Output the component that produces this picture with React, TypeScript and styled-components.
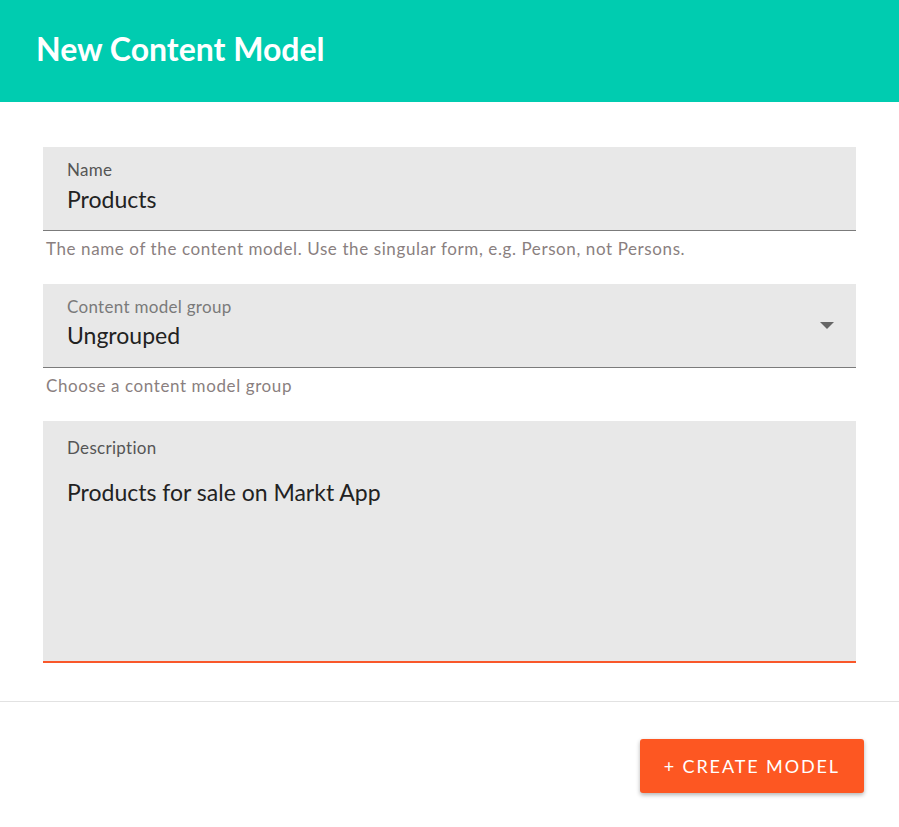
import React from "react";
import styled, { createGlobalStyle } from "styled-components";

const Global = createGlobalStyle`
  html, body { margin: 0; padding: 0; background: #ffffff; }
  body { font-family: Lato, "Liberation Sans", sans-serif; -webkit-font-smoothing: antialiased; }
  * { box-sizing: border-box; }
`;

const Page = styled.div`
  width: 899px;
  min-height: 827px;
  display: flex;
  flex-direction: column;
  background: #fff;
`;

const Header = styled.header`
  height: 102px;
  background: #00ccb0;
  display: flex;
  align-items: center;
  padding: 0 36px;
`;

const Title = styled.h1`
  margin: 0;
  color: #fff;
  font-size: 32px;
  font-weight: 700;
  line-height: 36px;
  padding-bottom: 4px;
`;

const Form = styled.div`
  padding: 45px 43px 38px;
  display: flex;
  flex-direction: column;
`;

const Field = styled.div<{ $h: number; $focused?: boolean }>`
  position: relative;
  height: ${(p) => p.$h}px;
  background: #e8e8e8;
  border-bottom: ${(p) => (p.$focused ? "2px solid #f9572a" : "1px solid #7b7b7b")};
  padding: 13px 24px 0;
  display: flex;
  flex-direction: column;
`;

const Label = styled.div<{ $muted?: boolean; $top?: number }>`
  font-size: 17px;
  line-height: 20px;
  letter-spacing: 0.3px;
  color: ${(p) => (p.$muted ? "#7a7a7a" : "#555")};
  margin-top: ${(p) => p.$top ?? 0}px;
`;

const Value = styled.div<{ $gap: number }>`
  font-size: 23px;
  line-height: 28px;
  color: #222;
  margin-top: ${(p) => p.$gap}px;
`;

const Helper = styled.div`
  font-size: 17px;
  line-height: 20px;
  color: #8a7f7f;
  letter-spacing: 0.6px;
  padding: 8px 3px 25px;
`;

const Arrow = styled.span`
  position: absolute;
  right: 22px;
  top: 38px;
  width: 0;
  height: 0;
  border-left: 7px solid transparent;
  border-right: 7px solid transparent;
  border-top: 7px solid #666;
`;

const Divider = styled.div`
  height: 1px;
  background: #e2e2e2;
`;

const Footer = styled.div`
  display: flex;
  justify-content: flex-end;
  padding: 37px 35px 34px;
`;

const Button = styled.button`
  height: 54px;
  padding: 0 24px 0 24px;
  border: none;
  border-radius: 3px;
  background: #fd5722;
  color: #fff;
  font-family: inherit;
  font-size: 18px;
  letter-spacing: 1.9px;
  box-shadow: 0 2px 4px rgba(0, 0, 0, 0.3);
`;

export default function App() {
  return (
    <Page>
      <Global />
      <Header>
        <Title>New Content Model</Title>
      </Header>
      <Form>
        <Field $h={84}>
          <Label>Name</Label>
          <Value $gap={5}>Products</Value>
        </Field>
        <Helper>The name of the content model. Use the singular form, e.g. Person, not Persons.</Helper>
        <Field $h={84}>
          <Label $muted>Content model group</Label>
          <Value $gap={4}>Ungrouped</Value>
          <Arrow />
        </Field>
        <Helper>Choose a content model group</Helper>
        <Field $h={242} $focused>
          <Label $top={4}>Description</Label>
          <Value $gap={20}>Products for sale on Markt App</Value>
        </Field>
      </Form>
      <Divider />
      <Footer>
        <Button>+ CREATE MODEL</Button>
      </Footer>
    </Page>
  );
}
